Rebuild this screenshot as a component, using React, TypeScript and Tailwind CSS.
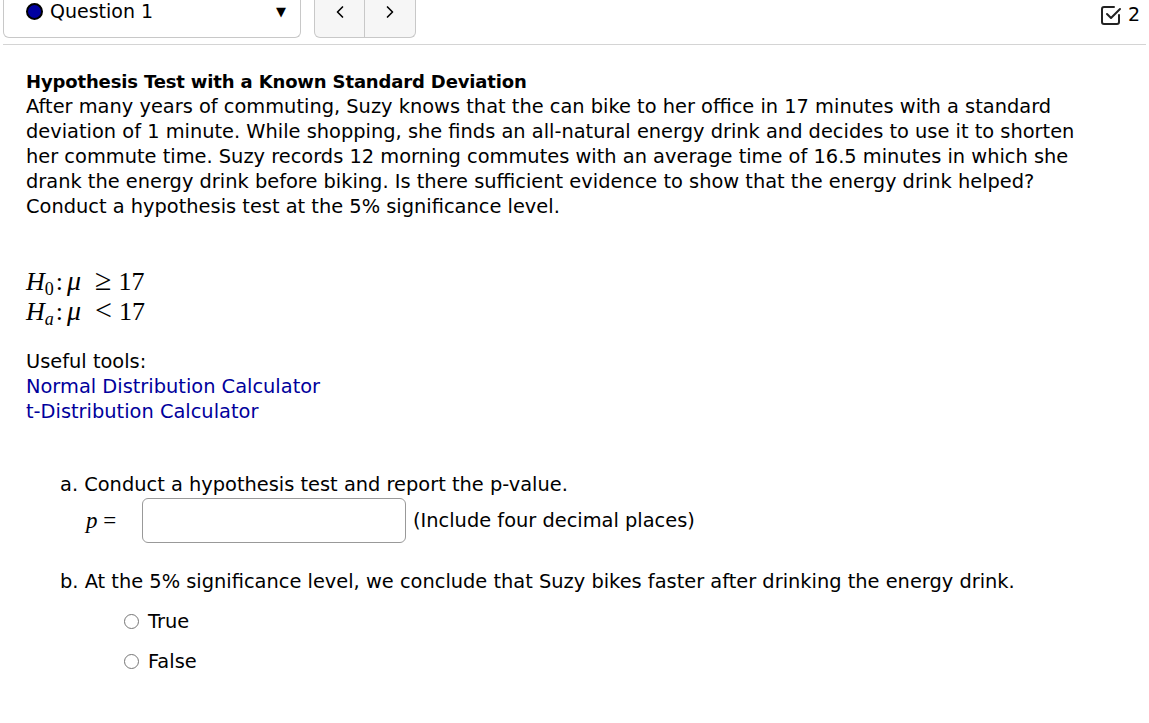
import { ChevronLeft, ChevronRight } from 'lucide-react';

function CheckSquare() {
  return (
    <svg width="22" height="22" viewBox="0 0 22 22" fill="none" stroke="#222" strokeWidth="2" strokeLinecap="round" strokeLinejoin="round">
      <path d="M19 11v7a2 2 0 0 1-2 2H4a2 2 0 0 1-2-2V5a2 2 0 0 1 2-2h10" />
      <path d="M7 10l4 4 9-9" />
    </svg>
  );
}

function Radio({ label }: { label: string }) {
  return (
    <label className="flex items-center gap-[9px] h-[40px]">
      <span className="w-[15px] h-[15px] rounded-full border border-[#767676] bg-white" />
      <span>{label}</span>
    </label>
  );
}

const serif = { fontFamily: '"Liberation Serif", serif' };

function Hypothesis({ sub, rel }: { sub: string; rel: string }) {
  return (
    <div className="flex items-baseline h-[30px]">
      <i>H</i>
      <sub className={sub === 'a' ? 'text-[18px] italic' : 'text-[18px]'}>{sub}</sub>
      <span className="ml-[2px]">:</span>
      <i className="ml-[4px] text-[28px] leading-none">μ</i>
      <span className="ml-[14px] text-[30px] leading-none">{rel}</span>
      <span className="ml-[7px]">17</span>
    </div>
  );
}

export default function App() {
  return (
    <div className="w-[1149px] h-[723px] bg-white text-black overflow-hidden text-[19.4px] leading-[25px]" style={{ fontFamily: '"DejaVu Sans", sans-serif' }}>
      <div className="flex items-start h-[45px] border-b border-[#d4d4d4] mx-[3px]">
        <div className="flex items-center w-[298px] h-[38px] border border-t-0 border-[#c8c8c8] rounded-b-[6px] pl-[22px] pr-[14px] pb-[14px]">
          <span className="w-[17px] h-[17px] rounded-full bg-[#0000a0] border-2 border-black" />
          <span className="ml-[7px] text-[19px]">Question 1</span>
          <span className="ml-auto text-[13px]">▼</span>
        </div>
        <div className="flex ml-[13px] h-[38px] border border-t-0 border-[#c8c8c8] rounded-b-[6px] bg-[#f6f6f6]">
          <div className="w-[50px] flex justify-center pt-[2px] border-r border-[#c8c8c8]">
            <ChevronLeft size={20} strokeWidth={2} />
          </div>
          <div className="w-[50px] flex justify-center pt-[2px]">
            <ChevronRight size={20} strokeWidth={2} />
          </div>
        </div>
        <div className="ml-auto flex items-center gap-[6px] pt-[2px] pr-[6px]">
          <CheckSquare />
          <span className="text-[19px]">2</span>
        </div>
      </div>

      <div className="px-[26px] pt-[24px] whitespace-nowrap">
        <div className="font-bold text-[18px] tracking-[-0.15px]">Hypothesis Test with a Known Standard Deviation</div>
        <p>
          After many years of commuting, Suzy knows that the can bike to her office in 17 minutes with a standard
          <br />
          deviation of 1 minute. While shopping, she finds an all-natural energy drink and decides to use it to shorten
          <br />
          her commute time. Suzy records 12 morning commutes with an average time of 16.5 minutes in which she
          <br />
          drank the energy drink before biking. Is there sufficient evidence to show that the energy drink helped?
          <br />
          Conduct a hypothesis test at the 5% significance level.
        </p>

        <div className="mt-[46px] text-[26px] leading-[30px]" style={serif}>
          <Hypothesis sub="0" rel="≥" />
          <Hypothesis sub="a" rel="<" />
        </div>

        <div className="mt-[24px]">Useful tools:</div>
        <div className="text-[#00009c]">Normal Distribution Calculator</div>
        <div className="text-[#00009c]">t-Distribution Calculator</div>

        <div className="mt-[48px] pl-[34px]">
          <div>a. Conduct a hypothesis test and report the p-value.</div>
          <div className="flex items-center mt-[1px]">
            <span className="w-[82px] pl-[26px] text-[23px]" style={serif}>
              <i>p</i> =
            </span>
            <div className="w-[264px] h-[45px] border border-[#999] rounded-[6px] bg-white" />
            <span className="ml-[7px]">(Include four decimal places)</span>
          </div>

          <div className="mt-[26px]">b. At the 5% significance level, we conclude that Suzy bikes faster after drinking the energy drink.</div>
          <div className="pl-[64px] mt-[7px]">
            <Radio label="True" />
            <Radio label="False" />
          </div>
        </div>
      </div>
    </div>
  );
}
